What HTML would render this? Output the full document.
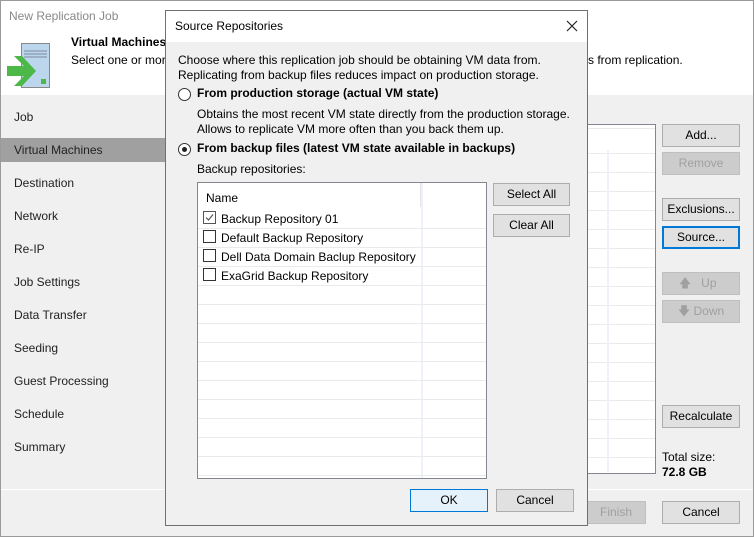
<!DOCTYPE html><html><head><style>
*{box-sizing:border-box;margin:0;padding:0}
body{width:754px;height:537px;position:relative;overflow:hidden;font-family:"Liberation Sans",sans-serif;font-size:12px;color:#000;background:#f0f0f0}
.a{position:absolute;white-space:nowrap}
.btn{position:absolute;border:1px solid #adadad;background:#e1e1e1;text-align:center;line-height:20px;font-size:12px}
.dis{color:#a0a0a0;background:#cccccc;border-color:#bfbfbf}
.nav{position:absolute;left:14px;font-size:12px;color:#222}
.cb{position:absolute;width:13px;height:13px;border:1px solid #333;background:#fff}
.rad{position:absolute;width:13px;height:13px;border:1px solid #333;border-radius:50%;background:#fff}
</style></head><body>
<div class="a" style="left:0;top:0;width:754px;height:537px;border:1px solid #9a9a9a"></div>
<div class="a" style="left:1px;top:1px;width:752px;height:94px;background:#fff"></div>
<div class="a" style="left:9px;top:9px;font-size:12px;color:#888">New Replication Job</div>
<svg class="a" style="left:6px;top:42px" width="46" height="48"><rect x="15.5" y="1.5" width="28" height="44" fill="#bcd6ee" stroke="#888"/><line x1="18" y1="9" x2="41" y2="9" stroke="#7a8a9a"/><line x1="18" y1="12" x2="41" y2="12" stroke="#7a8a9a"/><line x1="18" y1="15" x2="41" y2="15" stroke="#7a8a9a"/><rect x="35" y="37" width="5" height="5" fill="#4cb848"/><polygon points="1,24 18,24 8,14 16,14 30,29 16,44 8,44 18,34 1,34" fill="#4cb848"/></svg>
<div class="a" style="left:71px;top:35px;font-weight:bold">Virtual Machines</div>
<div class="a" style="left:71px;top:53px">Select one or more</div>
<div class="a" style="left:588px;top:53px">s from replication.</div>
<div class="a" style="left:1px;top:138px;width:164px;height:24px;background:#a0a0a0"></div>
<div class="nav" style="top:110px">Job</div>
<div class="nav" style="top:143px">Virtual Machines</div>
<div class="nav" style="top:176px">Destination</div>
<div class="nav" style="top:209px">Network</div>
<div class="nav" style="top:242px">Re-IP</div>
<div class="nav" style="top:275px">Job Settings</div>
<div class="nav" style="top:308px">Data Transfer</div>
<div class="nav" style="top:341px">Seeding</div>
<div class="nav" style="top:374px">Guest Processing</div>
<div class="nav" style="top:407px">Schedule</div>
<div class="nav" style="top:440px">Summary</div>
<div class="a" style="left:1px;top:489px;width:752px;height:1px;background:#fff"></div>
<div class="a" style="left:586px;top:124px;width:70px;height:350px;background:#fff repeating-linear-gradient(to bottom,transparent 0,transparent 18px,#eaeaea 18px,#eaeaea 19px);border:1px solid #828790;border-left:none;background-position:0 10px"></div>
<div class="a" style="left:607px;top:150px;width:2px;height:322px;background:#eef2f8"></div>
<div class="btn" style="left:662px;top:124px;width:78px;height:23px">Add...</div>
<div class="btn dis" style="left:662px;top:152px;width:78px;height:23px">Remove</div>
<div class="btn" style="left:662px;top:198px;width:78px;height:23px">Exclusions...</div>
<div class="btn" style="left:662px;top:226px;width:78px;height:23px;border:2px solid #0078d7;line-height:19px">Source...</div>
<div class="btn dis" style="left:662px;top:272px;width:78px;height:23px">&#129093;&nbsp;&nbsp;&nbsp;Up&nbsp;&nbsp;</div>
<div class="btn dis" style="left:662px;top:300px;width:78px;height:23px">&#129095; Down</div>
<div class="btn" style="left:662px;top:405px;width:78px;height:23px">Recalculate</div>
<div class="a" style="left:662px;top:450px">Total size:</div>
<div class="a" style="left:662px;top:465px;font-weight:bold">72.8 GB</div>
<div class="btn dis" style="left:586px;top:501px;width:60px;height:23px">Finish</div>
<div class="btn" style="left:662px;top:501px;width:78px;height:23px">Cancel</div>
<div class="a" style="left:165px;top:10px;width:423px;height:516px;background:#f0f0f0;border:1px solid #707070"></div>
<div class="a" style="left:166px;top:11px;width:421px;height:31px;background:#fff"></div>
<div class="a" style="left:175px;top:19px">Source Repositories</div>
<svg class="a" style="left:566px;top:20px" width="12" height="12"><path d="M1 1L11 11M11 1L1 11" stroke="#222" stroke-width="1.2"/></svg>
<div class="a" style="left:178px;top:53px;line-height:15px">Choose where this replication job should be obtaining VM data from.<br>Replicating from backup files reduces impact on production storage.</div>
<div class="rad" style="left:178px;top:88px"></div>
<div class="a" style="left:197px;top:86px;font-weight:bold">From production storage (actual VM state)</div>
<div class="a" style="left:197px;top:107px;line-height:15px">Obtains the most recent VM state directly from the production storage.<br>Allows to replicate VM more often than you back them up.</div>
<div class="rad" style="left:178px;top:143px"></div><div class="a" style="left:182px;top:147px;width:5px;height:5px;border-radius:50%;background:#222"></div>
<div class="a" style="left:197px;top:141px;font-weight:bold">From backup files (latest VM state available in backups)</div>
<div class="a" style="left:197px;top:162px">Backup repositories:</div>
<div class="a" style="left:197px;top:182px;width:290px;height:297px;background:#fff;border:1px solid #828790;overflow:hidden">
<div class="a" style="left:223px;top:0;width:2px;height:300px;background:#eef2f8"></div>
<div class="a" style="left:222px;top:0;width:1px;height:24px;background:#e5e5e5"></div>
<div class="a" style="left:8px;top:8px">Name</div>
<div class="a" style="left:0;top:27px;width:290px;height:300px;background:repeating-linear-gradient(to bottom,transparent 0,transparent 18px,#eaeaea 18px,#eaeaea 19px)"></div>
<div class="a" style="left:23px;top:29px">Backup Repository 01</div>
<div class="a" style="left:23px;top:48px">Default Backup Repository</div>
<div class="a" style="left:23px;top:67px">Dell Data Domain Baclup Repository</div>
<div class="a" style="left:23px;top:86px">ExaGrid Backup Repository</div>
</div>
<div class="cb" style="left:203px;top:211px;border-color:#555"></div>
<svg class="a" style="left:203px;top:211px" width="13" height="13"><path d="M3 6.5L5.5 9L10 3.5" stroke="#555" stroke-width="1.2" fill="none"/></svg>
<div class="cb" style="left:203px;top:230px"></div>
<div class="cb" style="left:203px;top:249px"></div>
<div class="cb" style="left:203px;top:268px"></div>
<div class="btn" style="left:493px;top:183px;width:77px;height:23px">Select All</div>
<div class="btn" style="left:493px;top:214px;width:77px;height:23px">Clear All</div>
<div class="btn" style="left:410px;top:489px;width:78px;height:23px;background:#e5f1fb;border-color:#0078d7">OK</div>
<div class="btn" style="left:496px;top:489px;width:78px;height:23px">Cancel</div>
</body></html>
